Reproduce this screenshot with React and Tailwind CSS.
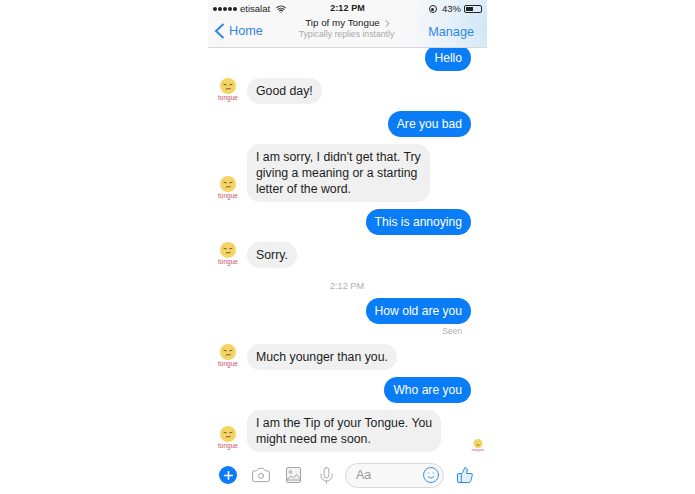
import { ChevronRight, Plus, Camera, Mic, Smile, ThumbsUp, Wifi } from "lucide-react";

const Avatar = () => (
  <div className="w-[24px] shrink-0 flex flex-col items-center mb-[3px]">
    <svg width="16" height="16" viewBox="0 0 18 18">
      <circle cx="9" cy="9" r="9" fill="#f6d365" />
      <path d="M4 7 L7.5 7.8 M10.5 7.8 L14 7" stroke="#6b5a2a" strokeWidth="1.1" fill="none" />
      <path d="M6.5 12.8 Q9 11.2 12 12.2" stroke="#6b5a2a" strokeWidth="1.1" fill="none" />
    </svg>
    <span className="text-[6.5px] leading-[6px] mt-[1px] text-[#c8566c]">tongue</span>
  </div>
);

const Me = ({ children }) => (
  <div className="flex justify-end pr-[16px]">
    <div className="bg-[#0a7cf6] text-white text-[12.1px] leading-[14px] rounded-[13px] px-[9px] py-[6px] h-[26px] whitespace-nowrap">
      {children}
    </div>
  </div>
);

const Them = ({ lines }) => (
  <div className="flex items-end pl-[8px] gap-[7px]">
    <Avatar />
    <div className="bg-[#f0f0f0] text-[#1d1d1d] text-[12.3px] leading-[16px] rounded-[13px] px-[9px] py-[5px] whitespace-nowrap">
      {lines.map((l) => (
        <div key={l}>{l}</div>
      ))}
    </div>
  </div>
);

const StatusBar = () => (
  <div className="flex items-center h-[17px] pt-[1px] px-[5px] text-[#222]">
    <div className="flex-1 flex items-center gap-[1px] text-[9.5px]">
      {[0, 1, 2, 3, 4].map((i) => (
        <span key={i} className="w-[4px] h-[4px] rounded-full bg-[#222]" />
      ))}
      <span className="ml-[2px]">etisalat</span>
      <Wifi size={10} strokeWidth={2.5} className="ml-[5px]" />
    </div>
    <div className="font-bold text-[9px] tracking-[0.1px]">2:12 PM</div>
    <div className="flex-1 flex items-center justify-end gap-[3px] text-[9.5px]">
      <span className="w-[8px] h-[8px] rounded-full border border-[#222] flex items-center justify-center">
        <span className="w-[3px] h-[3px] rounded-full bg-[#222]" />
      </span>
      <span className="ml-[2px]">43%</span>
      <span className="w-[18px] h-[8px] border border-[#222] rounded-[2px] p-[1px] flex">
        <span className="w-[7px] bg-[#222]" />
      </span>
    </div>
  </div>
);

const Header = () => (
  <div className="relative z-10 h-[48px] shrink-0 border-b border-[#d6d6d8] bg-[#f8f8f9] bg-[radial-gradient(circle_at_100%_55%,#cfe6f6_0%,#e6f1f9_14%,#f8f8f9_28%)]">
    <StatusBar />
    <div className="flex items-start">
      <div className="flex items-center w-[70px] pl-[6px] pt-[2px] text-[#2f87e6] text-[12.7px] leading-[24px]">
        <svg width="11" height="16" viewBox="0 0 11 16" fill="none" stroke="#2f87e6" strokeWidth="2" className="mr-[4px] shrink-0">
          <path d="M9.5 1 L2 8 L9.5 15" />
        </svg>
        <span>Home</span>
      </div>
      <div className="flex-1 flex flex-col items-center">
        <div className="flex items-center text-[9.8px] leading-[12px] text-[#222] ml-[3px]">
          Tip of my Tongue
          <ChevronRight size={11} className="text-[#777] ml-[2px]" />
        </div>
        <div className="text-[8.7px] leading-[11px] text-[#a9a9a9] -ml-[2px]">Typically replies instantly</div>
      </div>
      <div className="w-[70px] pr-[13px] pt-[7px] text-right text-[#2f87e6] text-[12.7px] leading-[16px]">Manage</div>
    </div>
  </div>
);

const PhotoIcon = () => (
  <svg width="15" height="16" viewBox="0 0 15 16" fill="none" stroke="#9a9a9a" strokeWidth="0.9" className="ml-[15px] shrink-0">
    <rect x="0.5" y="0.5" width="14" height="15" rx="1.5" fill="#f3f3f3" />
    <circle cx="4.5" cy="5" r="1.3" />
    <path d="M1 12.5 L5 9 L7.5 11 L10.5 7.5 L14 12" />
    <path d="M1 13 H14" />
  </svg>
);

const InputBar = () => (
  <div className="h-[42px] shrink-0 flex items-center pl-[11px] pt-[4px] bg-white">
    <div className="w-[18px] h-[18px] rounded-full bg-[#0a7cf6] flex items-center justify-center shrink-0">
      <Plus size={13} strokeWidth={3} className="text-white" />
    </div>
    <Camera size={20} strokeWidth={1.1} className="text-[#999] ml-[14px] shrink-0" />
    <PhotoIcon />
    <Mic size={19} strokeWidth={1.1} className="text-[#999] ml-[16px] shrink-0" />
    <div className="ml-[9px] w-[99px] h-[25px] shrink-0 rounded-[13px] border border-[#d8d8d8] bg-[#f8f8f8] flex items-center justify-between pl-[10px] pr-[3px] text-[#999] text-[12.5px]">
      Aa
      <Smile size={18} strokeWidth={1.2} className="text-[#1f8ae8]" />
    </div>
    <ThumbsUp size={18} strokeWidth={1.3} className="text-[#1f8ae8] fill-[#e3f0fb] ml-[12px] shrink-0" />
  </div>
);

export default function App() {
  return (
    <div className="flex justify-center bg-white h-[494px] overflow-hidden" style={{ fontFamily: '"Liberation Sans", Arial, sans-serif' }}>
      <div className="w-[279px] h-[494px] flex flex-col">
        <Header />
        <div className="flex-1 relative overflow-hidden">
          <div className="flex flex-col gap-[7px] -mt-[3px]">
            <Me>Hello</Me>
            <Them lines={["Good day!"]} />
            <Me>Are you bad</Me>
            <Them lines={["I am sorry, I didn't get that. Try", "giving a meaning or a starting", "letter of the word."]} />
            <Me>This is annoying</Me>
            <Them lines={["Sorry."]} />
            <div className="text-center text-[9.2px] leading-[11px] text-[#b0b0b0] mt-[6px] -mb-[1px] pr-[1px]">2:12 PM</div>
            <div>
              <Me>How old are you</Me>
              <div className="text-right pr-[25px] mt-[1px] text-[8.5px] leading-[12px] text-[#b0b0b0]">Seen</div>
            </div>
            <Them lines={["Much younger than you."]} />
            <Me>Who are you</Me>
            <Them lines={["I am the Tip of your Tongue. You", "might need me soon."]} />
          </div>
          {/* seen head next to the last message */}
          <div className="absolute right-[3px] bottom-0 flex flex-col items-center">
            <svg width="10" height="9" viewBox="0 0 18 18">
              <circle cx="9" cy="9" r="9" fill="#f6d365" />
              <path d="M6 12.5 Q9 11 12 12.5" stroke="#6b5a2a" strokeWidth="1.5" fill="none" />
            </svg>
            <span className="text-[4px] leading-[4px] text-[#c8566c]">tongue</span>
          </div>
        </div>
        <InputBar />
      </div>
    </div>
  );
}
